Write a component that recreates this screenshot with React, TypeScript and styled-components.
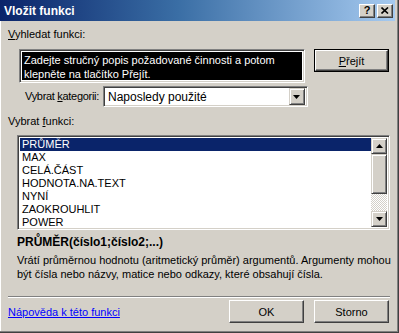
import React from 'react';
import styled, { createGlobalStyle } from 'styled-components';

const Global = createGlobalStyle`
  html, body { margin: 0; padding: 0; background: #D4D0C8; }
  body { font-family: "Liberation Sans", Arial, sans-serif; font-size: 11px; color: #000; }
`;

const Win = styled.div`
  width: 399px;
  height: 333px;
  box-sizing: border-box;
  background: #D4D0C8;
  border-right: 1px solid #404040;
  border-bottom: 1px solid #404040;
  box-shadow: inset -1px -1px #808080, inset 1px 0 #fff;
  padding: 0 3px 3px 0;
  display: flex;
  flex-direction: column;
  overflow: hidden;
`;

const TitleBar = styled.div`
  height: 21px;
  flex: none;
  background: linear-gradient(to right, #0A246A 0%, #3A6EA5 45%, #A6CAF0 100%);
  display: flex;
  align-items: center;
  padding: 0 2px 0 4px;
  color: #fff;
  font-family: "Liberation Sans", Tahoma, sans-serif;
  font-weight: bold;
  font-size: 12px;
`;

const Title = styled.div`
  flex: 1;
`;

const CapBtn = styled.div<{ $gap?: number }>`
  width: 16px;
  height: 14px;
  box-sizing: border-box;
  margin-left: ${p => p.$gap ?? 0}px;
  background: #D4D0C8;
  border: 1px solid;
  border-color: #fff #404040 #404040 #fff;
  box-shadow: inset -1px -1px #808080;
  display: flex;
  align-items: center;
  justify-content: center;
  color: #000;
  font-family: "Liberation Sans", Arial, sans-serif;
  font-size: 11px;
  font-weight: bold;
  line-height: 1;
`;

const Body = styled.div`
  flex: 1;
  display: flex;
  flex-direction: column;
  padding: 7px 6px 0 8px;
`;

const Label = styled.div<{ $indent?: number }>`
  padding-left: ${p => p.$indent ?? 0}px;
  height: 13px;
  line-height: 13px;
  white-space: nowrap;
`;

const U = styled.span`
  text-decoration: underline;
`;

const SearchRow = styled.div`
  display: flex;
  align-items: flex-start;
  margin-top: 8px;
  padding-left: 11px;
`;

const Sunken = styled.div`
  box-sizing: border-box;
  border: 1px solid;
  border-color: #808080 #fff #fff #808080;
  box-shadow: inset 1px 1px #404040, inset -1px -1px #D4D0C8;
`;

const SearchBox = styled(Sunken)`
  width: 287px;
  height: 34px;
  padding: 2px;
  background: #fff;
`;

const Selected = styled.div`
  background: #000;
  color: #fff;
  height: 100%;
  padding: 1px 2px;
  box-sizing: border-box;
  line-height: 14px;
`;

const Button = styled.div<{ $default?: boolean; $w?: number }>`
  width: ${p => p.$w ?? 75}px;
  height: 23px;
  box-sizing: border-box;
  border: 1px solid ${p => (p.$default ? '#000' : 'transparent')};
  display: flex;
  flex: none;
  & > span {
    flex: 1;
    display: flex;
    align-items: center;
    justify-content: center;
    border: 1px solid;
    border-color: #fff #404040 #404040 #fff;
    box-shadow: inset -1px -1px #808080;
    background: #D4D0C8;
    ${p => (p.$default ? '' : 'margin: -1px;')}
  }
`;

const GoBtn = styled(Button)`
  margin-left: 9px;
`;

const CatRow = styled.div`
  display: flex;
  align-items: center;
  margin-top: 3px;
  padding-left: 17px;
`;

const CatLabel = styled(Label)`
  letter-spacing: -0.3px;
`;

const Combo = styled(Sunken)`
  margin-left: 4px;
  width: 205px;
  height: 21px;
  background: #fff;
  display: flex;
  align-items: center;
  padding: 2px;
`;

const ComboText = styled.div`
  flex: 1;
  padding-left: 2px;
  font-size: 12px;
`;

const ArrowBtn = styled.div<{ $h?: number }>`
  width: 16px;
  height: ${p => p.$h ?? 17}px;
  box-sizing: border-box;
  background: #D4D0C8;
  border: 1px solid;
  border-color: #D4D0C8 #404040 #404040 #D4D0C8;
  box-shadow: inset 1px 1px #fff, inset -1px -1px #808080;
  display: flex;
  align-items: center;
  justify-content: center;
  flex: none;
`;

const FuncLabel = styled(Label)`
  margin-top: 8px;
`;

const ListWrap = styled(Sunken)`
  margin: 7px 0 0 9px;
  width: 373px;
  height: 95px;
  background: #fff;
  display: flex;
  padding: 2px;
`;

const Items = styled.div`
  flex: 1;
  display: flex;
  flex-direction: column;
`;

const Item = styled.div<{ $sel?: boolean }>`
  height: 13px;
  line-height: 13px;
  padding-left: 2px;
  background: ${p => (p.$sel ? '#0A246A' : 'transparent')};
  color: ${p => (p.$sel ? '#fff' : '#000')};
`;

const ScrollBar = styled.div`
  width: 16px;
  display: flex;
  flex-direction: column;
`;

const Thumb = styled.div`
  height: 40px;
  box-sizing: border-box;
  background: #D4D0C8;
  border: 1px solid;
  border-color: #D4D0C8 #404040 #404040 #D4D0C8;
  box-shadow: inset 1px 1px #fff, inset -1px -1px #808080;
`;

const Track = styled.div`
  flex: 1;
  background-color: #fff;
  background-image: repeating-conic-gradient(#D4D0C8 0 25%, #fff 0 50%);
  background-size: 2px 2px;
`;

const Signature = styled.div`
  margin: 5px 0 0 9px;
  font-weight: bold;
  font-size: 12px;
  line-height: 14px;
`;

const Desc = styled.div`
  margin: 4px 0 0 9px;
  line-height: 14px;
  font-size: 11px;
  width: 378px;
`;

const Sep = styled.div`
  margin-top: 15px;
  height: 0;
  border-top: 1px solid #808080;
  border-bottom: 1px solid #fff;
  width: 382px;
`;

const Footer = styled.div`
  display: flex;
  align-items: center;
  margin-top: 2px;
`;

const Link = styled.span`
  color: #0000FF;
  text-decoration: underline;
  flex: 1;
`;

const OkBtn = styled(Button)`
  margin-right: 10px;
`;

const Down = () => (
  <svg width="7" height="4" viewBox="0 0 7 4"><path d="M0 0h7L3.5 4z" fill="#000" /></svg>
);
const Up = () => (
  <svg width="7" height="4" viewBox="0 0 7 4"><path d="M0 4h7L3.5 0z" fill="#000" /></svg>
);

const funcs = ['PRŮMĚR', 'MAX', 'CELÁ.ČÁST', 'HODNOTA.NA.TEXT', 'NYNÍ', 'ZAOKROUHLIT', 'POWER'];

export default function App() {
  return (
    <>
      <Global />
      <Win>
        <TitleBar>
          <Title>Vložit funkci</Title>
          <CapBtn>?</CapBtn>
          <CapBtn $gap={2}>
            <svg width="8" height="7" viewBox="0 0 8 7">
              <path d="M0.5 0.5L7 6.5M7 0.5L0.5 6.5" stroke="#000" strokeWidth="1.6" />
            </svg>
          </CapBtn>
        </TitleBar>
        <Body>
          <Label><U>V</U>yhledat funkci:</Label>
          <SearchRow>
            <SearchBox>
              <Selected>
                Zadejte stručný popis požadované činnosti a potom<br />
                klepněte na tlačítko Přejít.
              </Selected>
            </SearchBox>
            <GoBtn $default><span><U>P</U>řejít</span></GoBtn>
          </SearchRow>
          <CatRow>
            <CatLabel>Vybrat <U>k</U>ategorii:</CatLabel>
            <Combo>
              <ComboText>Naposledy použité</ComboText>
              <ArrowBtn><Down /></ArrowBtn>
            </Combo>
          </CatRow>
          <FuncLabel>Vybrat <U>f</U>unkci:</FuncLabel>
          <ListWrap>
            <Items>
              {funcs.map((f, i) => (
                <Item key={f} $sel={i === 0}>{f}</Item>
              ))}
            </Items>
            <ScrollBar>
              <ArrowBtn $h={16}><Up /></ArrowBtn>
              <Thumb />
              <Track />
              <ArrowBtn $h={16}><Down /></ArrowBtn>
            </ScrollBar>
          </ListWrap>
          <Signature>PRŮMĚR(číslo1;číslo2;...)</Signature>
          <Desc>
            Vrátí průměrnou hodnotu (aritmetický průměr) argumentů. Argumenty mohou
            být čísla nebo názvy, matice nebo odkazy, které obsahují čísla.
          </Desc>
          <Sep />
          <Footer>
            <Link>Nápověda k této funkci</Link>
            <OkBtn><span>OK</span></OkBtn>
            <Button><span>Storno</span></Button>
          </Footer>
        </Body>
      </Win>
    </>
  );
}
